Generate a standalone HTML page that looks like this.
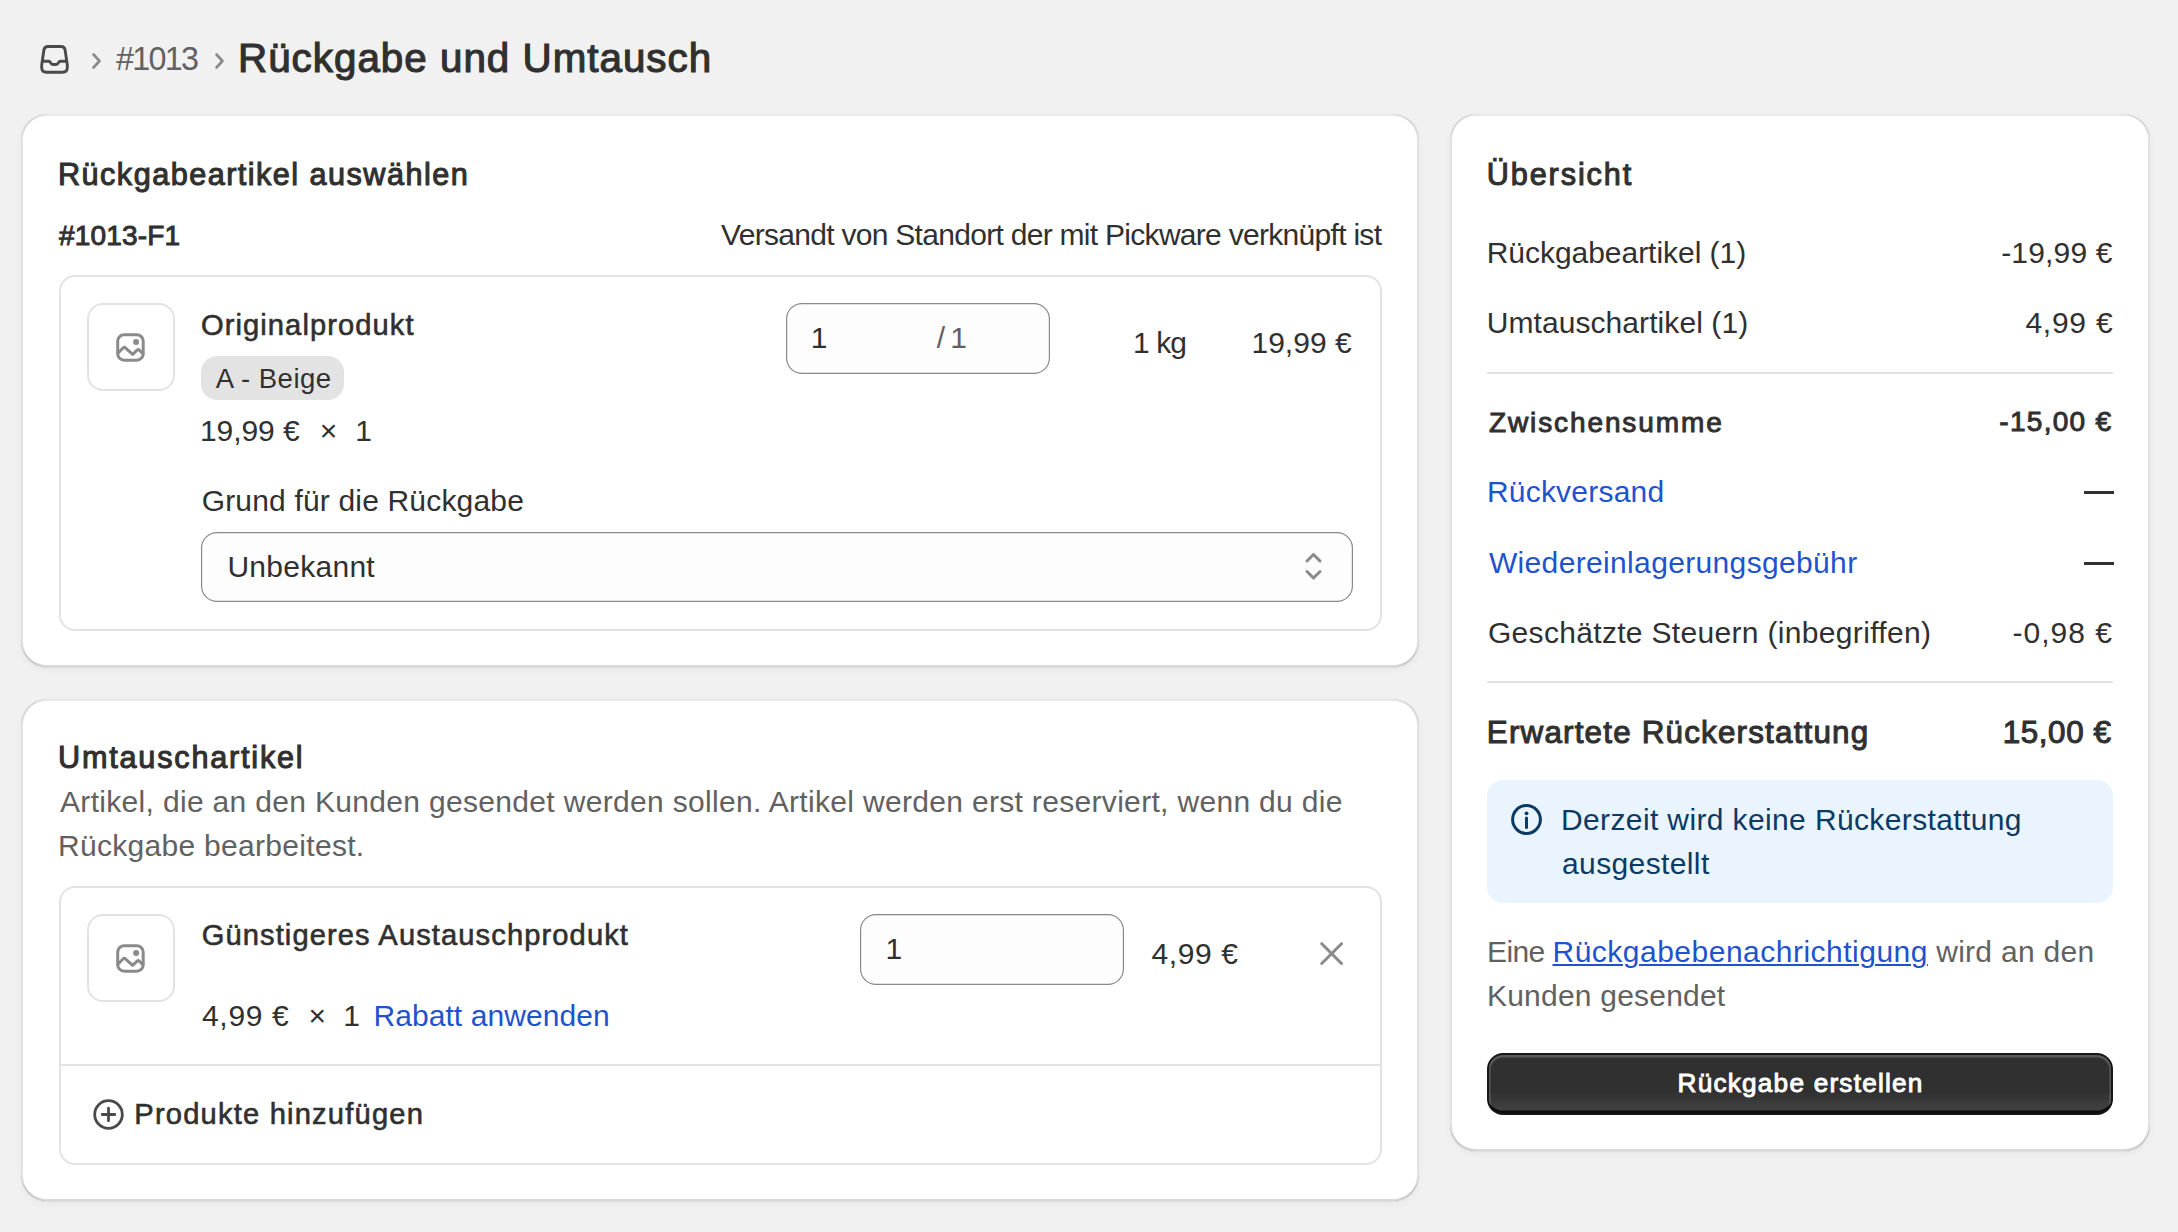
<!DOCTYPE html>
<html><head><meta charset="utf-8"><style>
html,body{margin:0;padding:0;}
body{width:2178px;height:1232px;background:#f1f1f1;position:relative;overflow:hidden;font-family:"Liberation Sans",sans-serif;}
.t{position:absolute;white-space:pre;font-family:"Liberation Sans",sans-serif;}
.card{position:absolute;background:#fff;border-radius:26px;box-shadow:0 1px 0 0 rgba(26,26,26,.05), 0 3px 8px -1px rgba(0,0,0,.06), inset 2px 0 0 0 rgba(0,0,0,.11), inset -2px 0 0 0 rgba(0,0,0,.11), inset 0 -2px 0 0 rgba(0,0,0,.15), inset 0 2px 0 0 rgba(0,0,0,.09);}
.box{position:absolute;border:2px solid #e3e3e3;border-radius:16px;box-sizing:border-box;}
.thumb{position:absolute;border:2px solid #e3e3e3;border-radius:16px;box-sizing:border-box;background:#fff;}
.inp{position:absolute;background:#fdfdfd;border-radius:16px;box-shadow:inset 0 0 0 1.2px #8a8a8a;}
.hr{position:absolute;height:2px;background:#e3e3e3;}
svg{position:absolute;overflow:visible;}
</style></head><body>
<!-- breadcrumb icons -->
<svg style="left:40px;top:45px" width="29" height="29" viewBox="0 0 29 29" fill="none" stroke="#4a4a4a" stroke-width="2.9" stroke-linejoin="round" stroke-linecap="round">
<path d="M8 1.45H21Q24.6 1.45 25.1 5L27.3 20V22.5Q27.3 27.25 22.5 27.25H6.5Q1.7 27.25 1.7 22.5V20L3.9 5Q4.4 1.45 8 1.45Z"/>
<path d="M2.6 16.2H8.6Q9.7 16.2 10.3 17.2L11.2 18.6Q11.9 19.5 13 19.5H16Q17.1 19.5 17.8 18.6L18.7 17.2Q19.3 16.2 20.4 16.2H26.4"/>
</svg>
<svg style="left:90px;top:52px" width="14" height="20" viewBox="0 0 14 20" fill="none" stroke="#8a8a8a" stroke-width="2.6" stroke-linecap="round" stroke-linejoin="round"><path d="M3.5 2.5L9.5 9L3.5 15.5"/></svg>
<svg style="left:213px;top:52px" width="14" height="20" viewBox="0 0 14 20" fill="none" stroke="#8a8a8a" stroke-width="2.6" stroke-linecap="round" stroke-linejoin="round"><path d="M3.5 2.5L9.5 9L3.5 15.5"/></svg>

<!-- card 1 -->
<div class="card" style="left:21px;top:114px;width:1398px;height:553px"></div>
<div class="box" style="left:59px;top:275px;width:1323px;height:356px"></div>
<div class="thumb" style="left:87px;top:303px;width:88px;height:88px"></div>
<svg style="left:116px;top:333px" width="29" height="29" viewBox="0 0 29 29" fill="none" stroke="#8a8a8a" stroke-width="3" stroke-linejoin="round" stroke-linecap="round">
<rect x="1.7" y="1.7" width="25.5" height="25.5" rx="6.5"/>
<path d="M1.9 20.2L7.2 14.8Q8.3 13.8 9.4 14.8L16.6 21.4L21.1 17.1Q22.2 16.2 23.3 17.1L27 20.8"/>
<circle cx="20.1" cy="9.1" r="3" fill="#8a8a8a" stroke="none"/>
</svg>
<div style="position:absolute;left:201px;top:356px;width:143px;height:44px;background:#e3e3e3;border-radius:16px"></div>
<div class="inp" style="left:786px;top:303px;width:264px;height:71px"></div>
<div class="inp" style="left:201px;top:532px;width:1152px;height:70px"></div>
<svg style="left:1303px;top:551px" width="22" height="32" viewBox="0 0 22 32" fill="none" stroke="#8a8a8a" stroke-width="3" stroke-linecap="round" stroke-linejoin="round">
<path d="M4 10L10.5 3.5L17 10"/><path d="M4 20.5L10.5 27L17 20.5"/>
</svg>

<!-- card 2 -->
<div class="card" style="left:21px;top:699px;width:1398px;height:502px"></div>
<div class="box" style="left:59px;top:886px;width:1323px;height:279px"></div>
<div class="hr" style="left:61px;top:1064px;width:1319px"></div>
<div class="thumb" style="left:87px;top:914px;width:88px;height:88px"></div>
<svg style="left:116px;top:944px" width="29" height="29" viewBox="0 0 29 29" fill="none" stroke="#8a8a8a" stroke-width="3" stroke-linejoin="round" stroke-linecap="round">
<rect x="1.7" y="1.7" width="25.5" height="25.5" rx="6.5"/>
<path d="M1.9 20.2L7.2 14.8Q8.3 13.8 9.4 14.8L16.6 21.4L21.1 17.1Q22.2 16.2 23.3 17.1L27 20.8"/>
<circle cx="20.1" cy="9.1" r="3" fill="#8a8a8a" stroke="none"/>
</svg>
<div class="inp" style="left:860px;top:914px;width:264px;height:71px"></div>
<svg style="left:1318px;top:940px" width="28" height="28" viewBox="0 0 28 28" fill="none" stroke="#8a8a8a" stroke-width="3" stroke-linecap="round"><path d="M3.7 3.7L23.5 23.5M23.5 3.7L3.7 23.5"/></svg>
<svg style="left:92px;top:1098px" width="33" height="33" viewBox="0 0 33 33" fill="none" stroke="#4a4a4a" stroke-width="2.8" stroke-linecap="round"><circle cx="16.5" cy="16.5" r="13.8"/><path d="M16.5 10.2V22.8M10.2 16.5H22.8"/></svg>

<!-- card 3 -->
<div class="card" style="left:1450px;top:114px;width:700px;height:1037px"></div>
<div class="hr" style="left:1487px;top:372px;width:626px"></div>
<div class="hr" style="left:1487px;top:681px;width:626px"></div>
<svg style="left:2084px;top:491px" width="30" height="4"><rect x="0" y="0" width="30" height="3" fill="#303030"/></svg>
<svg style="left:2084px;top:562px" width="30" height="4"><rect x="0" y="0" width="30" height="3" fill="#303030"/></svg>
<div style="position:absolute;left:1487px;top:780px;width:626px;height:123px;background:#eaf4ff;border-radius:16px"></div>
<svg style="left:1510px;top:803px" width="33" height="33" viewBox="0 0 33 33" fill="none" stroke="#0b3a63" stroke-width="3" stroke-linecap="round"><circle cx="16.5" cy="16.5" r="13.9"/><path d="M16.5 15V24.5"/><circle cx="16.5" cy="10.3" r="1.9" fill="#0b3a63" stroke="none"/></svg>
<div style="position:absolute;left:1487px;top:1053px;width:626px;height:62px;border-radius:16px;background:#303030;box-shadow:inset 0 0 0 2px #161616, inset 0 -4.5px 0 0 #0d0d0d, inset 0 1px 0 3.5px rgba(255,255,255,.2);background-image:linear-gradient(180deg,#303030 0%,#303030 62%,#474747 100%)"></div>

<div class="t" style="left:116px;top:43.0px;font-size:32.32px;line-height:32.32px;letter-spacing:-1.75px;color:#616161;font-weight:400;">#1013</div><div class="t" style="left:238px;top:38.42px;font-size:40.36px;line-height:40.36px;letter-spacing:1.0px;color:#303030;font-weight:400;-webkit-text-stroke:1.15px #303030;">Rückgabe und Umtausch</div><div class="t" style="left:58px;top:158.67px;font-size:30.65px;line-height:30.65px;letter-spacing:1.458px;color:#303030;font-weight:400;-webkit-text-stroke:1.05px #303030;">Rückgabeartikel auswählen</div><div class="t" style="left:59px;top:221.53px;font-size:28.04px;line-height:28.04px;letter-spacing:0.143px;color:#303030;font-weight:400;-webkit-text-stroke:0.95px #303030;">#1013-F1</div><div class="t" style="left:721px;top:220.0px;font-size:30.0px;line-height:30.0px;letter-spacing:-0.706px;color:#303030;font-weight:400;">Versandt von Standort der mit Pickware verknüpft ist</div><div class="t" style="left:201px;top:310.5px;font-size:29.13px;line-height:29.13px;letter-spacing:1.071px;color:#303030;font-weight:400;-webkit-text-stroke:0.6px #303030;">Originalprodukt</div><div class="t" style="left:215.7px;top:365.0px;font-size:27.54px;line-height:27.54px;letter-spacing:0.451px;color:#303030;font-weight:400;">A - Beige</div><div class="t" style="left:200px;top:416.0px;font-size:30.0px;line-height:30.0px;letter-spacing:-0.067px;color:#303030;font-weight:400;">19,99 €</div><div class="t" style="left:319.8px;top:416.0px;font-size:30.0px;line-height:30.0px;letter-spacing:0px;color:#303030;font-weight:400;">×</div><div class="t" style="left:355.2px;top:416.0px;font-size:30.0px;line-height:30.0px;letter-spacing:0px;color:#303030;font-weight:400;">1</div><div class="t" style="left:810.7px;top:323.0px;font-size:30.0px;line-height:30.0px;letter-spacing:0px;color:#303030;font-weight:400;">1</div><div class="t" style="left:936.7px;top:323.4px;font-size:30.0px;line-height:30.0px;letter-spacing:-1.6px;color:#616161;font-weight:400;">/ 1</div><div class="t" style="left:1133px;top:328.4px;font-size:30.0px;line-height:30.0px;letter-spacing:-0.933px;color:#303030;font-weight:400;">1 kg</div><div class="t" style="left:1251.5px;top:328.4px;font-size:30.0px;line-height:30.0px;letter-spacing:0.0px;color:#303030;font-weight:400;">19,99 €</div><div class="t" style="left:201.7px;top:486.0px;font-size:30.0px;line-height:30.0px;letter-spacing:0.172px;color:#303030;font-weight:400;">Grund für die Rückgabe</div><div class="t" style="left:227.4px;top:552.0px;font-size:30.0px;line-height:30.0px;letter-spacing:0.275px;color:#303030;font-weight:400;">Unbekannt</div><div class="t" style="left:58px;top:742.48px;font-size:30.65px;line-height:30.65px;letter-spacing:1.786px;color:#303030;font-weight:400;-webkit-text-stroke:1.05px #303030;">Umtauschartikel</div><div class="t" style="left:60px;top:786.7px;font-size:30.0px;line-height:30.0px;letter-spacing:0.323px;color:#616161;font-weight:400;">Artikel, die an den Kunden gesendet werden sollen. Artikel werden erst reserviert, wenn du die</div><div class="t" style="left:58px;top:830.8px;font-size:30.0px;line-height:30.0px;letter-spacing:0.3px;color:#616161;font-weight:400;">Rückgabe bearbeitest.</div><div class="t" style="left:201.7px;top:921.1px;font-size:29.13px;line-height:29.13px;letter-spacing:1.096px;color:#303030;font-weight:400;-webkit-text-stroke:0.6px #303030;">Günstigeres Austauschprodukt</div><div class="t" style="left:202px;top:1000.7px;font-size:30.0px;line-height:30.0px;letter-spacing:0.68px;color:#303030;font-weight:400;">4,99 €</div><div class="t" style="left:308.4px;top:1000.7px;font-size:30.0px;line-height:30.0px;letter-spacing:0px;color:#303030;font-weight:400;">×</div><div class="t" style="left:343.2px;top:1000.7px;font-size:30.0px;line-height:30.0px;letter-spacing:0px;color:#303030;font-weight:400;">1</div><div class="t" style="left:373.4px;top:1000.7px;font-size:30.0px;line-height:30.0px;letter-spacing:0.085px;color:#1f52cf;font-weight:400;">Rabatt anwenden</div><div class="t" style="left:885.6px;top:934.0px;font-size:30.0px;line-height:30.0px;letter-spacing:0px;color:#303030;font-weight:400;">1</div><div class="t" style="left:1151.4px;top:939.3px;font-size:30.0px;line-height:30.0px;letter-spacing:0.64px;color:#303030;font-weight:400;">4,99 €</div><div class="t" style="left:134.3px;top:1100.2px;font-size:29.13px;line-height:29.13px;letter-spacing:1.189px;color:#303030;font-weight:400;-webkit-text-stroke:0.6px #303030;">Produkte hinzufügen</div><div class="t" style="left:1486.7px;top:158.67px;font-size:30.65px;line-height:30.65px;letter-spacing:1.899px;color:#303030;font-weight:400;-webkit-text-stroke:1.05px #303030;">Übersicht</div><div class="t" style="left:1486.7px;top:238.0px;font-size:30.0px;line-height:30.0px;letter-spacing:-0.034px;color:#303030;font-weight:400;">Rückgabeartikel (1)</div><div class="t" style="left:2001.2px;top:237.6px;font-size:30.0px;line-height:30.0px;letter-spacing:0.172px;color:#303030;font-weight:400;">-19,99 €</div><div class="t" style="left:1486.7px;top:308.0px;font-size:30.0px;line-height:30.0px;letter-spacing:0.077px;color:#303030;font-weight:400;">Umtauschartikel (1)</div><div class="t" style="left:2025.4px;top:307.8px;font-size:30.0px;line-height:30.0px;letter-spacing:0.76px;color:#303030;font-weight:400;">4,99 €</div><div class="t" style="left:1488.9px;top:408.82px;font-size:28.04px;line-height:28.04px;letter-spacing:1.883px;color:#303030;font-weight:400;-webkit-text-stroke:0.95px #303030;">Zwischensumme</div><div class="t" style="left:1999.3px;top:408.32px;font-size:28.04px;line-height:28.04px;letter-spacing:1.286px;color:#303030;font-weight:400;-webkit-text-stroke:0.95px #303030;">-15,00 €</div><div class="t" style="left:1486.9px;top:477.0px;font-size:30.0px;line-height:30.0px;letter-spacing:0.22px;color:#1f52cf;font-weight:400;">Rückversand</div><div class="t" style="left:1488.9px;top:548.0px;font-size:30.0px;line-height:30.0px;letter-spacing:0.348px;color:#1f52cf;font-weight:400;">Wiedereinlagerungsgebühr</div><div class="t" style="left:1487.9px;top:618.0px;font-size:30.0px;line-height:30.0px;letter-spacing:0.323px;color:#303030;font-weight:400;">Geschätzte Steuern (inbegriffen)</div><div class="t" style="left:2012.5px;top:617.8px;font-size:30.0px;line-height:30.0px;letter-spacing:1.0px;color:#303030;font-weight:400;">-0,98 €</div><div class="t" style="left:1486.8px;top:716.77px;font-size:31.38px;line-height:31.38px;letter-spacing:1.192px;color:#303030;font-weight:400;-webkit-text-stroke:1.05px #303030;">Erwartete Rückerstattung</div><div class="t" style="left:2002.8px;top:716.77px;font-size:31.38px;line-height:31.38px;letter-spacing:0.566px;color:#303030;font-weight:400;-webkit-text-stroke:1.05px #303030;">15,00 €</div><div class="t" style="left:1561px;top:805.3px;font-size:30.0px;line-height:30.0px;letter-spacing:0.375px;color:#0b3a63;font-weight:400;">Derzeit wird keine Rückerstattung</div><div class="t" style="left:1562px;top:849.2px;font-size:30.0px;line-height:30.0px;letter-spacing:0.38px;color:#0b3a63;font-weight:400;">ausgestellt</div><div class="t" style="left:1487.1px;top:937.0px;font-size:30.0px;line-height:30.0px;letter-spacing:-0.667px;color:#616161;font-weight:400;">Eine</div><div class="t" style="text-decoration:underline;text-decoration-thickness:1.6px;text-underline-offset:2px;text-decoration-skip-ink:auto;left:1552.5px;top:937.0px;font-size:30.0px;line-height:30.0px;letter-spacing:0.495px;color:#1f52cf;font-weight:400;">Rückgabebenachrichtigung</div><div class="t" style="left:1936.2px;top:937.0px;font-size:30.0px;line-height:30.0px;letter-spacing:0.28px;color:#616161;font-weight:400;">wird an den</div><div class="t" style="left:1487px;top:980.8px;font-size:30.0px;line-height:30.0px;letter-spacing:0.214px;color:#616161;font-weight:400;">Kunden gesendet</div><div class="t" style="left:1677.6px;top:1070.33px;font-size:26.16px;line-height:26.16px;letter-spacing:1.223px;color:#ffffff;font-weight:400;-webkit-text-stroke:0.95px #ffffff;">Rückgabe erstellen</div>
</body></html>
